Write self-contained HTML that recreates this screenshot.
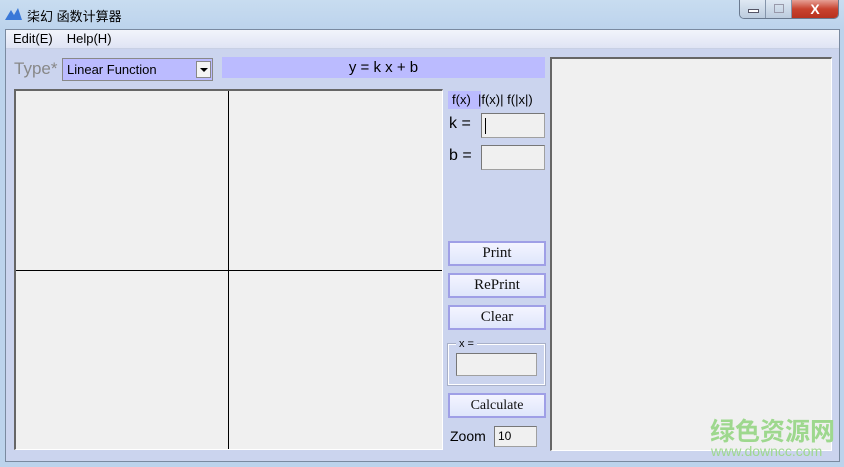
<!DOCTYPE html><html><head><meta charset="utf-8"><style>
*{margin:0;padding:0;box-sizing:border-box}
html,body{width:844px;height:467px;overflow:hidden}
body{background:#bcd3ec;font-family:"Liberation Sans","Noto Sans CJK SC",sans-serif;position:relative}
.a{position:absolute;white-space:nowrap}
.btn{position:absolute;left:448px;width:98px;height:25px;border:2px solid #9f9fe6;background:linear-gradient(#f4f4ff,#dfe6fb);font-family:"Liberation Serif",serif;font-size:15px;text-align:center;line-height:21px;color:#111}
.inp{position:absolute;background:#f0f0f0;border:1px solid #a0a0a0;border-top-color:#777;border-left-color:#777}
</style></head><body>
<div class="a" style="left:0;top:0;width:844px;height:30px;background:linear-gradient(#c8dcf0,#bcd3ec)"></div>
<svg class="a" style="left:5px;top:7px" width="18" height="14"><path d="M0 13 L6 3 L9 8 L13 1 L17 13Z" fill="#3a78d8"/></svg>
<div class="a" style="left:27px;top:6px;font-size:13px;color:#000">柒幻 函数计算器</div>
<div class="a" style="left:739px;top:0;width:100px;height:19px;border:1px solid #6a7a90;border-top:none;border-radius:0 0 5px 5px;overflow:hidden;display:flex">
<div style="width:26px;background:linear-gradient(#dfe8f3,#bcccde);border-right:1px solid #8494aa;position:relative"><div class="a" style="left:8px;top:9px;width:11px;height:4px;background:#fff;border:1px solid #556"></div></div>
<div style="width:26px;background:linear-gradient(#dfe8f3,#bcccde);border-right:1px solid #8494aa;position:relative"><div class="a" style="left:8px;top:4px;width:10px;height:9px;border:1px solid #99a"></div></div>
<div style="flex:1;background:linear-gradient(#e6a095,#c8432f 50%,#b83220);color:#fff;font-weight:bold;font-size:14px;text-align:center;line-height:18px">X</div></div>
<div class="a" style="left:5px;top:29px;width:835px;height:433px;background:#cbd4ee;border:1px solid #7a8aa0"></div>
<div class="a" style="left:6px;top:30px;width:833px;height:19px;background:linear-gradient(#f2f4fb,#dfe4f4);border-bottom:1px solid #c8d0e4;font-size:13px;line-height:18px"><span style="margin-left:7px">Edit(E)</span><span style="margin-left:14px">Help(H)</span></div>
<div class="a" style="left:14px;top:59px;font-size:17px;color:#888">Type*</div>
<div class="a" style="left:62px;top:58px;width:151px;height:23px;border:1px solid #888;background:#bbbbff;font-size:13px;line-height:21px;padding-left:4px">Linear Function</div>
<div class="a" style="left:196px;top:61px;width:15px;height:17px;background:#f4f4f4;border:1px solid #888"><div class="a" style="left:3px;top:6px;border:4px solid transparent;border-top:4px solid #000"></div></div>
<div class="a" style="left:222px;top:57px;width:323px;height:21px;background:#bbbbff;font-size:15px;text-align:center;line-height:21px">y = k x + b</div>
<div class="a" style="left:14px;top:89px;width:429px;height:361px;background:#f0f0f0;border-left:2px solid #666;border-top:2px solid #666;border-right:1px solid #fff;border-bottom:1px solid #fff"></div>
<div class="a" style="left:228px;top:91px;width:1px;height:358px;background:#000"></div>
<div class="a" style="left:16px;top:270px;width:426px;height:1px;background:#000"></div>
<div class="a" style="left:448px;top:91px;width:33px;height:18px;background:#bbbbff"></div>
<div class="a" style="left:452px;top:91px;font-size:13px;line-height:18px">f(x)&nbsp; |f(x)| f(|x|)</div>
<div class="a" style="left:449px;top:115px;font-size:16px">k =</div>
<div class="inp" style="left:481px;top:113px;width:64px;height:25px"><div class="a" style="left:3px;top:4px;width:1px;height:16px;background:#000"></div></div>
<div class="a" style="left:449px;top:147px;font-size:16px">b =</div>
<div class="inp" style="left:481px;top:145px;width:64px;height:25px"></div>
<div class="btn" style="top:241px">Print</div>
<div class="btn" style="top:273px">RePrint</div>
<div class="btn" style="top:305px">Clear</div>
<div class="a" style="left:448px;top:344px;width:97px;height:41px;border:1px solid #fff;outline:1px solid #a8b0c8"></div>
<div class="a" style="left:456px;top:338px;background:#cbd4ee;padding:0 3px;font-size:11px">x =</div>
<div class="inp" style="left:456px;top:353px;width:81px;height:23px"></div>
<div class="btn" style="top:393px;font-size:14px">Calculate</div>
<div class="a" style="left:450px;top:428px;font-size:14px">Zoom</div>
<div class="inp" style="left:494px;top:426px;width:43px;height:21px;font-size:12px;line-height:19px;padding-left:3px">10</div>
<div class="a" style="left:550px;top:57px;width:282px;height:394px;background:#f0f0f0;border-left:2px solid #666;border-top:2px solid #666;border-right:1px solid #fff;border-bottom:1px solid #fff"></div>
<div class="a" style="left:710px;top:412px;font-size:25px;font-weight:bold;color:#9ed88e;letter-spacing:0px">绿色资源网</div>
<div class="a" style="left:711px;top:443px;font-size:14px;color:#9ed88e">www.downcc.com</div>
</body></html>
